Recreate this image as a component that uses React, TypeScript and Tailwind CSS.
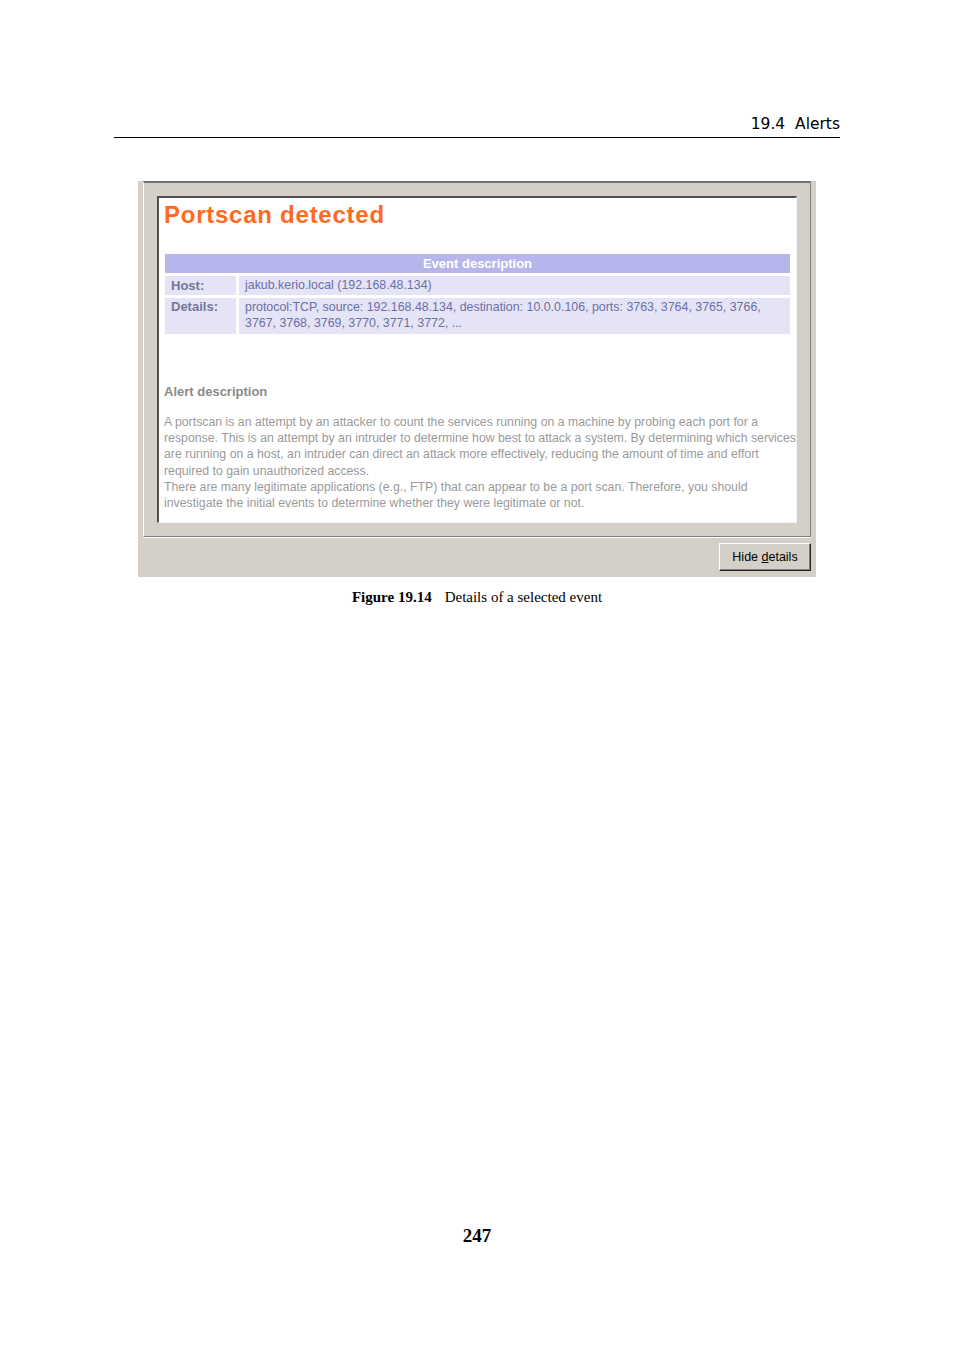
import React from "react";

const ui = { fontFamily: '"Liberation Sans", Arial, sans-serif' };
const serif = { fontFamily: '"Liberation Serif", "Times New Roman", serif' };

const desc = [
  "A portscan is an attempt by an attacker to count the services running on a machine by probing each port for a",
  "response. This is an attempt by an intruder to determine how best to attack a system. By determining which services",
  "are running on a host, an intruder can direct an attack more effectively, reducing the amount of time and effort",
  "required to gain unauthorized access.",
  "There are many legitimate applications (e.g., FTP) that can appear to be a port scan. Therefore, you should",
  "investigate the initial events to determine whether they were legitimate or not.",
];

function EventTable() {
  return (
    <div className="mx-[6px] mt-[24px] flex flex-col gap-[3px]" style={ui}>
      <div className="h-[19px] bg-[#b6b6ec] text-center text-[13px] font-bold leading-[19px] text-white">
        Event description
      </div>
      <div className="flex gap-[3px]">
        <div className="w-[71px] shrink-0 bg-[#e4e4f6] pl-[6px] text-[13px] font-bold leading-[19px] text-[#74769a]">
          Host:
        </div>
        <div className="flex-1 bg-[#e4e4f6] pl-[6px] text-[12.4px] leading-[19px] text-[#6c6ea6]">
          jakub.kerio.local (192.168.48.134)
        </div>
      </div>
      <div className="flex gap-[3px]">
        <div className="w-[71px] shrink-0 bg-[#e4e4f6] pl-[6px] pt-[1px] text-[13px] font-bold leading-[16px] text-[#74769a]">
          Details:
        </div>
        <div className="flex-1 bg-[#e4e4f6] pb-[3px] pl-[6px] pt-[1px] text-[12.4px] leading-[16px] text-[#6c6ea6]">
          protocol:TCP, source: 192.168.48.134, destination: 10.0.0.106, ports: 3763, 3764, 3765, 3766,
          <br />
          3767, 3768, 3769, 3770, 3771, 3772, ...
        </div>
      </div>
    </div>
  );
}

export default function App() {
  return (
    <div className="relative h-[1350px] w-[954px] bg-white">
      <div className="mx-[114px] pt-[114px]">
        <div
          className="flex justify-end border-b border-black pb-[2px] text-[15.5px] leading-[21px] text-black"
          style={{ fontFamily: '"DejaVu Sans", sans-serif' }}
        >
          19.4&nbsp;&nbsp;Alerts
        </div>
      </div>

      <div className="ml-[138px] mt-[43px] h-[396px] w-[678px] bg-[#d4d0c8] px-[5px]">
        <div className="h-[356px] border-b border-r border-t-2 border-l border-b-[#808080] border-l-white border-r-[#808080] border-t-[#707070] shadow-[0_1px_0_#ffffff]">
          <div className="ml-[13px] mr-[13px] mt-[13px] h-[327px] border-l-2 border-t-2 border-r border-b border-l-[#505050] border-t-[#505050] border-r-[#f4f4f4] border-b-[#f4f4f4] bg-white">
            <div
              className="pl-[5px] pt-[2px] text-[24px] font-bold leading-[30px] tracking-[0.75px] text-[#ff6a1f]"
              style={ui}
            >
              Portscan detected
            </div>
            <EventTable />
            <div
              className="ml-[5px] mt-[50px] text-[13px] font-bold leading-[16px] text-[#8a8a8a]"
              style={ui}
            >
              Alert description
            </div>
            <div
              className="ml-[5px] mt-[14px] text-[12.3px] leading-[16.2px] text-[#9a9a9a]"
              style={ui}
            >
              {desc.map((l, i) => (
                <div key={i} className="whitespace-nowrap">
                  {l}
                </div>
              ))}
            </div>
          </div>
        </div>
        <div className="mt-[6px] flex justify-end">
          <button
            className="h-[28px] w-[92px] border border-b-[#202020] border-l-white border-r-[#202020] border-t-white bg-[#d4d0c8] text-[12.5px] text-black shadow-[inset_-1px_-1px_0_#808080]"
            style={ui}
          >
            Hide <span className="underline">d</span>etails
          </button>
        </div>
      </div>

      <div className="mt-[12px] text-center text-[15px] leading-[17px] text-black" style={serif}>
        <span className="font-bold">Figure 19.14</span>
        <span className="ml-[13px]">Details of a selected event</span>
      </div>

      <div
        className="absolute left-0 right-0 top-[1225px] text-center text-[19px] font-bold leading-[22px] text-black"
        style={serif}
      >
        247
      </div>
    </div>
  );
}
